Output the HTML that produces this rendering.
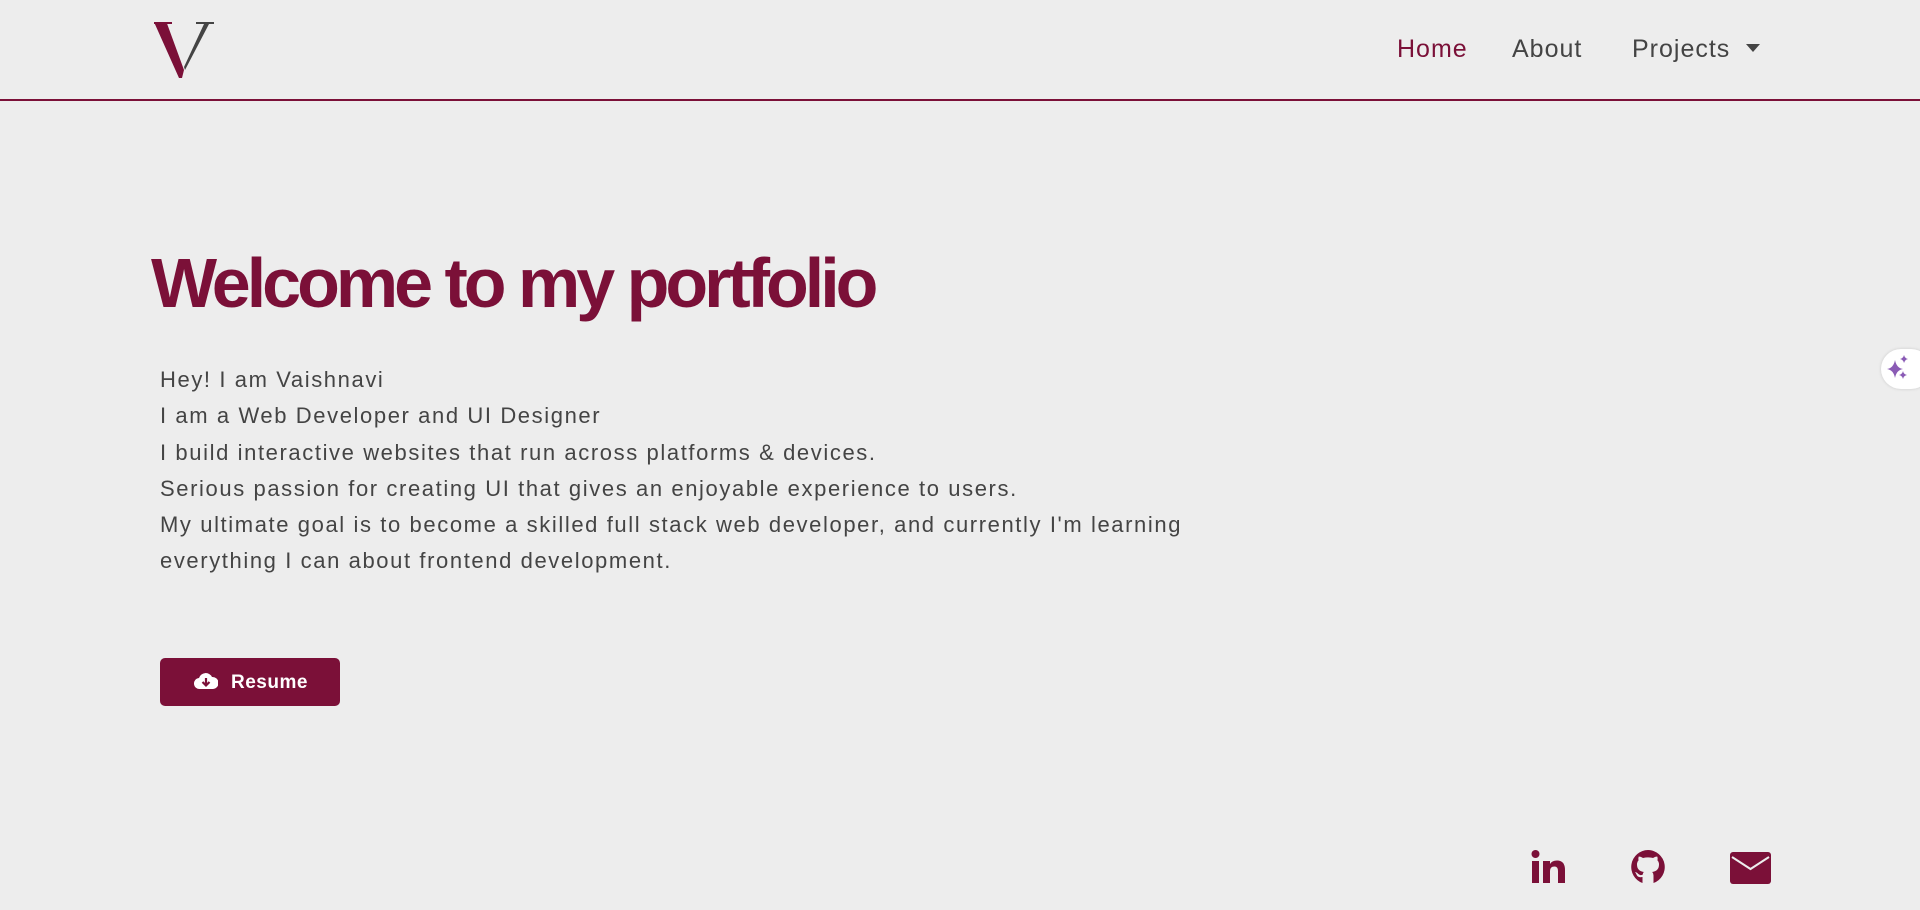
<!DOCTYPE html>
<html><head><meta charset="utf-8">
<style>
html,body{margin:0;padding:0;}
body{width:1920px;height:910px;background:#ededed;position:relative;overflow:hidden;font-family:"Liberation Sans",sans-serif;}
.nav{position:absolute;left:0;top:0;width:1920px;height:99px;border-bottom:2px solid #7b1038;}
.nav a{position:absolute;top:34px;font-size:25px;color:#444;text-decoration:none;line-height:30px;letter-spacing:1px;}
h1{position:absolute;left:151px;top:240px;margin:0;font-size:70px;font-weight:bold;color:#7b1038;letter-spacing:-4px;line-height:86px;white-space:nowrap;}
.p{position:absolute;left:160px;top:362px;font-size:22px;line-height:36.3px;color:#444;letter-spacing:1.6px;white-space:nowrap;}
.btn{position:absolute;left:160px;top:658px;width:180px;height:48px;background:#7b1038;border-radius:5px;color:#fff;font-weight:bold;font-size:19px;}
.btn span{position:absolute;left:71px;top:14px;letter-spacing:0.5px;}
</style></head><body>
<div class="nav">
  <svg style="position:absolute;left:152px;top:20px" width="66" height="60" viewBox="0 0 66 60">
    <path d="M2 2 H20 V3.5 L15 3.5 L32 50 L30 58 L27 58 Z" fill="#7b1038"/>
    <path d="M2 2 H20 V4 H2 Z" fill="#7b1038"/>
    <path d="M44 2 H62 V4 H57 L33 50 L32 47 L52 4 H44 Z" fill="#444"/>
  </svg>
  <a style="left:1397px;color:#7b1038">Home</a>
  <a style="left:1512px">About</a>
  <a style="left:1632px">Projects</a>
  <svg style="position:absolute;left:1746px;top:44px" width="14" height="8"><path d="M0 0 H14 L7 8 Z" fill="#444"/></svg>
</div>
<h1>Welcome to my portfolio</h1>
<div class="p">Hey! I am Vaishnavi<br>I am a Web Developer and UI Designer<br>I build interactive websites that run across platforms &amp; devices.<br>Serious passion for creating UI that gives an enjoyable experience to users.<br>My ultimate goal is to become a skilled full stack web developer, and currently I'm learning<br>everything I can about frontend development.</div>
<div class="btn">
  <svg style="position:absolute;left:34px;top:14px" width="24" height="18" viewBox="0 0 24 18">
    <path d="M6 17 A5.5 5.5 0 0 1 5 6 A7 7 0 0 1 18 5 A6 6 0 0 1 19 17 Z" fill="#fff"/>
    <path d="M12 6 V13 M8.5 10 L12 13.5 L15.5 10" stroke="#7b1038" stroke-width="2.2" fill="none"/>
  </svg>
  <span>Resume</span>
</div>
<div style="position:absolute;left:1881px;top:349px;width:50px;height:40px;background:#fff;border-radius:20px;box-shadow:0 0 3px rgba(0,0,0,.15)"></div>
<svg style="position:absolute;left:1884px;top:354px" width="30" height="30" viewBox="0 0 30 30">
  <path d="M11 6 Q12.5 14 19 15 Q12.5 16 11 24 Q9.5 16 3 15 Q9.5 14 11 6 Z" fill="#8a5bb5"/>
  <path d="M20 1 Q20.7 4.3 24 5 Q20.7 5.7 20 9 Q19.3 5.7 16 5 Q19.3 4.3 20 1 Z" fill="#8a5bb5"/>
  <path d="M19 17 Q19.7 20.3 23 21 Q19.7 21.7 19 25 Q18.3 21.7 15 21 Q18.3 20.3 19 17 Z" fill="#8a5bb5"/>
</svg>
<svg style="position:absolute;left:1531px;top:850px" width="36" height="34" viewBox="0 0 36 34">
  <circle cx="4.5" cy="4" r="4" fill="#7b1038"/>
  <rect x="1" y="11" width="7" height="22" fill="#7b1038"/>
  <path d="M12 11 H19 V14 Q21 10.5 26 10.5 Q34 10.5 34 20 V33 H27 V21 Q27 16.5 23.5 16.5 Q19 16.5 19 21 V33 H12 Z" fill="#7b1038"/>
</svg>
<svg style="position:absolute;left:1630px;top:849px" width="36" height="36" viewBox="0 0 36 36">
  <path d="M18 1 A17 17 0 0 0 12.5 34 V28 Q7.5 29 6.5 25.5 Q6 24 5 23.5 Q5.5 22.8 7 23.8 Q8.5 25.5 10 26 Q11.5 26.3 12.7 25.6 Q12.8 24 13.8 23 Q7 22 7 15.5 Q7 13 8.6 11.3 Q8 9.5 8.8 7.5 Q10.8 7.5 13 9 Q18 7.7 23 9 Q25.2 7.5 27.2 7.5 Q28 9.5 27.4 11.3 Q29 13 29 15.5 Q29 22 22.2 23 Q23.5 24.3 23.5 26.5 V34 A17 17 0 0 0 18 1 Z" fill="#7b1038"/>
</svg>
<svg style="position:absolute;left:1730px;top:852px" width="41" height="32" viewBox="0 0 41 32">
  <rect x="0" y="0" width="41" height="32" rx="3" fill="#7b1038"/>
  <path d="M2 5 L20.5 17 L39 5" stroke="#ededed" stroke-width="2" fill="none"/>
</svg>
</body></html>
